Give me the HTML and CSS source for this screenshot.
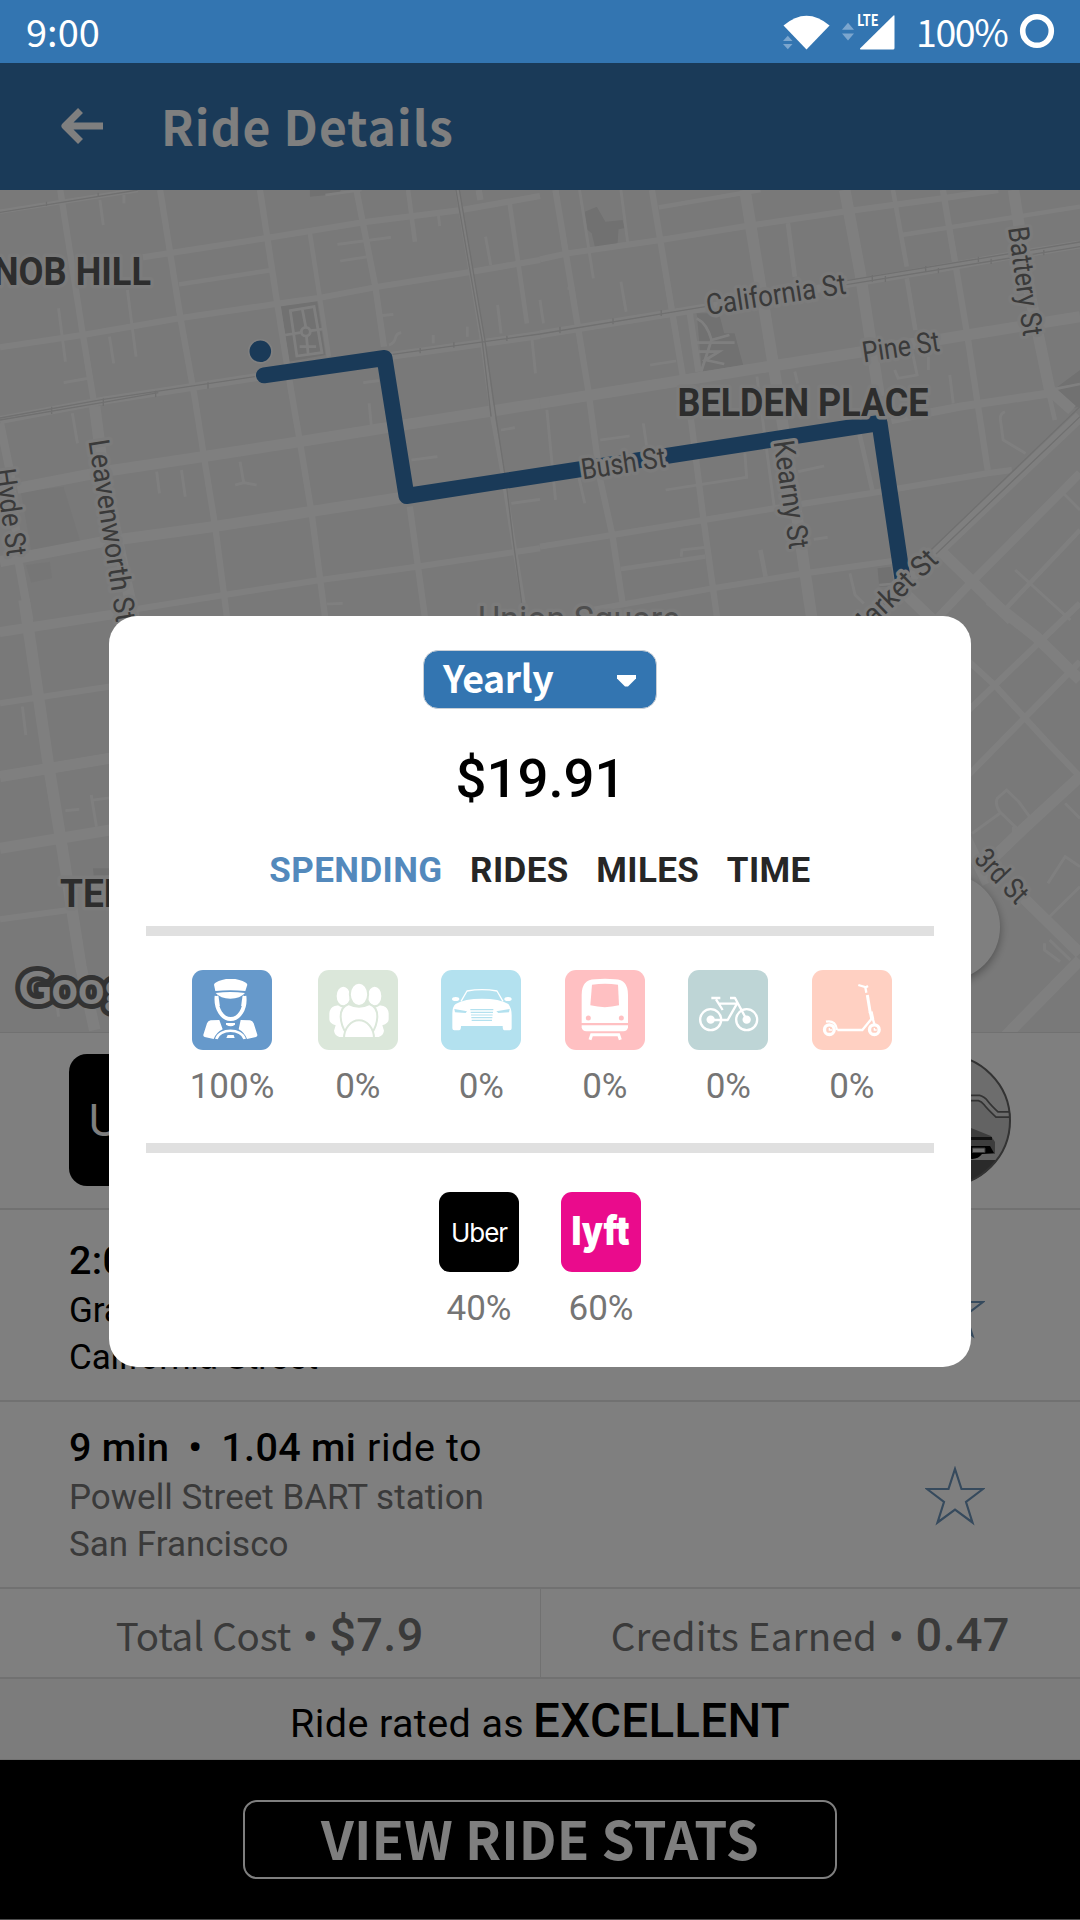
FILE: index.html
```html
<!DOCTYPE html>
<html lang="en">
<head>
<meta charset="utf-8">
<title>Ride Details</title>
<link rel="stylesheet" href="styles.css">
</head>
<body>
<div class="screen">
  <header class="status">
    <span class="status-time">9:00</span>
    <svg class="status-icons" width="116" height="63" viewBox="782 0 116 63">
      <path d="M783.5 25.500Q806.500 6 829.600 25.500L806.500 49.500Z" fill="#fff"/>
      <path d="M783 41h9.500l-4.700-5.300zM783 44h9.500l-4.700 5.300z" fill="#7ca6ce"/>
      <path d="M842 29.800h12l-6-7zM842 33.500h12l-6 7z" fill="#7ca6ce"/>
      <path d="M860 48.500L893.500 15.500q1-.8 1 .5V48q0 1.500-1.500 1.500H861q-1.500 0-1-1z" fill="#fff"/>
      <text class="lte" x="857" y="26" textLength="21.500" lengthAdjust="spacingAndGlyphs">LTE</text>
    </svg>
    <span class="status-battery">100%</span>
    <svg class="battery-ring" width="36" height="63" viewBox="1019 0 36 63"><circle cx="1037" cy="31" r="14.300" fill="none" stroke="#fff" stroke-width="5.600"/></svg>
  </header>

  <div class="app">
    <div class="appbar">
      <svg class="back" width="44" height="40" viewBox="0 0 44 40"><path d="M43 20H6M20.500 4.500L5 20l15.500 15.500" fill="none" stroke="#fff" stroke-width="7" stroke-linejoin="round"/></svg>
      <h1 class="title">Ride Details</h1>
    </div>

    <svg class="map" width="1080" height="843" viewBox="0 0 1080 843">
      <rect width="1080" height="843" fill="#f3f3f3"/>
      <!-- upper left blocks -->
      <g transform="scale(.34437 .33333)">
        <path class="park" d="M60 905L185 890L235 1060L90 1080ZM75 1125L145 1115L152 1165L90 1178Z" opacity=".35"/>
        <path class="park" d="M815 345L920 328L945 495L840 515ZM900 0H990L985 12L900 20Z"/>
        <path class="road w8" d="M290 30L300 105M170 355L190 515M370 300L395 500M318 440L330 520M185 578L255 565M210 670L225 760M455 845L463 910M527 840L538 920M697 815L708 880M683 885L708 878L745 885M980 163L1135 142M988 213L1070 200M1108 377L1142 373M1130 465Q1145 460 1148 445T1165 428M1072 640L1078 705M1055 578L1100 572M1195 810L1270 800M1485 940L1568 928M945 15L1050 0M1455 720L1495 713M950 1242L995 1240M1273 75L1277 108M1410 140L1425 225M1445 345L1455 430M360 15V40M1258 435V460M1357 410V440M1545 450L1555 550M843 362L912 350L935 488L862 498ZM878 358L888 412M890 440L895 495M828 435L872 428M903 422L940 417M870 470H918"/>
        <circle class="road w8" cx="888" cy="425" r="13"/>
        <path class="road w14" d="M0 65L400 0M520 283L790 240M900 130L955 500M1185 0L1205 155M1480 40L1530 400M1328 0L1400 450L1430 680L1460 850L1490 1050L1520 1240"/>
        <path class="road w18" d="M415 202L770 145L1055 97L1340 60L1568 18M0 472L240 435L520 385L800 342L920 325L1100 290L1370 245L1568 210M175 0L240 430L275 650M465 0L525 390L565 620L600 850L625 1010L660 1290M755 0L805 340L845 600L870 750L905 970L945 1290M1035 0L1090 290L1115 470M1190 950L1235 1290M0 1320L380 1260L650 1215L930 1170L1210 1130L1568 1075M1390 0L1395 30"/>
        <path class="road w24" d="M0 690L300 632L740 562L1140 497L1568 435M0 700L30 850L55 1120L85 1290"/>
        <path class="road w34" d="M50 895L300 845L590 800L870 755L1200 700L1568 640M0 1115L300 1055L620 1010L900 965L1180 920M275 650L300 850L390 1290"/>
        <path class="rail" d="M0 67L400 0M0 690L300 637L460 608M0 684L300 628L740 560M1140 493L1568 432M1324 0L1400 450L1426 680M1334 0L1408 450L1440 680M1440 680L1470 880L1490 1050L1515 1240M285 8V22M135 35V48M1220 474V490M1318 457V473M1472 437V453M604 577V596M452 602V622M300 625V648M150 650V672"/>
      </g>
      <!-- upper right blocks -->
      <g transform="translate(540 0) scale(.34437 .33333)">
        <path class="park" d="M130 65L165 50L190 95L240 90L245 115L228 118L225 165L160 173L150 130L138 120ZM455 370L520 370L535 430L565 430L590 525L470 545ZM1490 600L1568 540V650L1545 655ZM980 1135L1020 1130L1030 1190L985 1190Z"/>
        <path class="road w8" d="M115 0L155 265M235 0L255 160M235 275L250 365M80 295H100M92 280L95 330M0 330L10 400M175 750L260 738M365 900L600 862L595 790M750 845L825 828M795 1048L835 1042M320 525L395 513M630 560L680 950M740 545L748 580M300 700L310 770M1030 540L1040 565L1095 555L1080 480M1190 555L1200 640M1350 665Q1335 670 1337 690L1345 750L1410 790M410 1100L412 1080L480 1072M900 1150L915 1215L940 1240M455 385Q485 400 498 450L468 545M455 458H565M498 450L550 435M460 485H520L480 510L535 522M985 1185L1020 1182M20 660L45 930M110 850L130 940M1520 910L1568 960M1380 1140L1540 1290M1490 598L1568 582M1128 500V540"/>
        <path class="road w14" d="M345 52L640 0M1050 135L1190 112L1568 50M720 100L740 260M1025 0L1065 230M1065 265L1090 420M925 720L965 900M640 1080L655 1160M235 1137L480 1100M1568 1020L1340 1270M1475 600L1495 690"/>
        <path class="road w18" d="M0 208L80 190L350 150L600 108L880 65L1170 25L1330 0M45 0L140 600L175 870L210 1035L240 1240M325 0L415 560L440 700L475 990L515 1290M435 370L460 545M1170 0L1240 430L1300 840M0 1070L210 1035L475 990L680 955L960 910L1300 850L1370 840M140 1262L500 1195L770 1150L1060 1108"/>
        <path class="road w24" d="M0 433L480 353L900 280L1150 237L1350 200L1568 163M1568 850L1250 1180L1140 1300M1020 690L1220 650L1480 610"/>
        <path class="road w34" d="M0 640L600 540L1150 450L1568 380M595 0L680 540L735 900L770 1150L790 1290M885 0L930 250L985 620M1375 0L1420 300L1480 600L1545 660M1170 1090L1370 1290M1568 680L1150 1090L940 1300M1060 1210L1140 1290"/>
        <path class="rail" d="M0 432L480 350M890 272L1568 156M890 284L1568 170M1568 650L1135 1080M1568 680L1150 1092M58 410V430M212 385V403M352 360V378M965 255V275M1003 258V276M1120 228V246M1157 234V250M1273 200V216M1310 206V222M1463 180V196"/>
      </g>
      <!-- lower left blocks -->
      <g transform="translate(0 410) scale(.34437 .33333)">
        <path class="park" d="M270 805H330V825L272 828Z"/>
        <path class="road w8" d="M65 320L75 405M190 632L230 628M265 585L280 680M270 600L330 592M160 1170L170 1250"/>
        <path class="road w18" d="M0 102L330 48M0 310L330 258M0 958L200 930M150 1180L330 1150"/>
        <path class="road w34" d="M0 530L330 473M0 745L330 688M70 0L140 490L180 740L235 1100L275 1290"/>
      </g>
      <!-- lower right blocks -->
      <g transform="translate(540 410) scale(.34437 .33333)">
        <path class="road w8" d="M1425 655L1390 605L1355 570L1328 595Q1320 612 1335 635L1395 695M1465 965L1568 860M1525 610L1568 655M1475 850L1525 770L1568 800M1465 1030V1050L1510 1085M1480 1020L1540 1080M1255 700L1335 640M1375 680V700"/>
        <path class="road w18" d="M1230 170L1320 255L1480 435L1568 530M1230 540L1568 185M1230 345L1568 10"/>
        <path class="road w34" d="M1305 0L1440 110L1568 240M1290 800L1400 690L1568 530M1350 1310L1568 1080M1400 890L1568 1060M1230 700L1300 850"/>
      </g>
      <rect y="842" width="1080" height="1" fill="#e2e2e2"/>

      <g class="route">
        <path d="M264 185.300L384.500 168L406.500 306L879.500 233L903 392"/>
        <path d="M891 407L862 435" stroke-width="2"/>
        <circle cx="260.300" cy="161.300" r="11.600" fill="#3575b1" stroke="#fff" stroke-width="1.600"/>
      </g>

      <g class="street">
        <text transform="translate(707.700 125) rotate(-8.800)" textLength="141" lengthAdjust="spacingAndGlyphs">California St</text>
        <text transform="translate(863.700 172.500) rotate(-8.700)" textLength="78" lengthAdjust="spacingAndGlyphs">Pine St</text>
        <text transform="translate(582.700 289.500) rotate(-8.700)" textLength="85" lengthAdjust="spacingAndGlyphs">Bush St</text>
        <text transform="translate(1008 38) rotate(82)" textLength="110" lengthAdjust="spacingAndGlyphs">Battery St</text>
        <text transform="translate(773.500 252) rotate(81.500)" textLength="109" lengthAdjust="spacingAndGlyphs">Kearny St</text>
        <text transform="translate(88.500 251) rotate(81.300)" textLength="184" lengthAdjust="spacingAndGlyphs">Leavenworth St</text>
        <text transform="translate(-5 280) rotate(82)" textLength="88" lengthAdjust="spacingAndGlyphs">Hyde St</text>
        <text transform="translate(857 452.500) rotate(-44.500)" textLength="116" lengthAdjust="spacingAndGlyphs">Market St</text>
        <text transform="translate(973 670) rotate(46.500)" textLength="63" lengthAdjust="spacingAndGlyphs">3rd St</text>
      </g>
      <g class="district">
        <text x="-7" y="94.500" textLength="158" lengthAdjust="spacingAndGlyphs">NOB HILL</text>
        <text x="677.500" y="226" textLength="251" lengthAdjust="spacingAndGlyphs">BELDEN PLACE</text>
        <text x="60" y="717" textLength="220" lengthAdjust="spacingAndGlyphs">TENDERLOIN</text>
      </g>
      <text class="landmark" x="478" y="442" textLength="202" lengthAdjust="spacingAndGlyphs">Union Square</text>
      <text class="google" x="18.500" y="813.500">Google</text>
      <circle class="fab" cx="947" cy="737" r="53"/>
    </svg>

    <section class="providers">
      <div class="provider-tile">Uber</div>
      <svg class="photo" width="133" height="133" viewBox="0 0 133 133">
        <defs><clipPath id="disc"><circle cx="66.500" cy="66.500" r="66"/></clipPath></defs>
        <g clip-path="url(#disc)">
          <rect width="133" height="133" fill="#dadada"/>
          <path d="M0 45H103L118 60H133V106H0Z" fill="#c6c6c6"/>
          <path d="M0 106H133V133H0Z" fill="#545454"/>
          <path d="M60 70L93 74L113 82L117 88V100H50Z" fill="#7a7a7a"/>
          <path d="M60 83H114V86H60Z" fill="#222"/>
          <path d="M60 92H112L116 99L104 100Q98 108 86 103H60Z" fill="#000"/>
          <path d="M94.500 94H107V98.500H94.500Z" fill="#ddd" stroke="#666"/>
          <path d="M0 44H101Q105 45 108 49T119 60.500H133" fill="none" stroke="#666" stroke-width="7"/>
          <path d="M0 44H101Q105 45 108 49T119 60.500H133" fill="none" stroke="#d8d8d8" stroke-width="3.500"/>
        </g>
        <circle cx="66.500" cy="66.500" r="65.500" fill="none" stroke="#666" stroke-width="2"/>
      </svg>
    </section>

    <section class="stop stop-from">
      <div class="stop-text">
        <p class="stop-head"><b>2:04 PM</b></p>
        <p class="stop-line dark">Grace Cathedral</p>
        <p class="stop-line dark">California Street</p>
      </div>
      <svg class="star" width="60" height="60" viewBox="0 0 60 60"><path d="M30 3L36.500 23H58L41 36L47.500 56.500L30 43.500L12.500 56.500L19 36L2 23H23.500Z"/></svg>
    </section>

    <section class="stop stop-to">
      <div class="stop-text">
        <p class="stop-head"><b>9 min</b><b class="dot">•</b><b>1.04 mi</b> <span class="ride-to">ride to</span></p>
        <p class="stop-line">Powell Street BART station</p>
        <p class="stop-line">San Francisco</p>
      </div>
      <svg class="star" width="60" height="60" viewBox="0 0 60 60"><path d="M30 3L36.500 23H58L41 36L47.500 56.500L30 43.500L12.500 56.500L19 36L2 23H23.500Z"/></svg>
    </section>

    <section class="totals">
      <div class="total"><span class="total-label">Total Cost</span><span class="bullet">•</span><span class="total-value">$7.9</span></div>
      <div class="total"><span class="total-label wide">Credits Earned</span><span class="bullet">•</span><span class="total-value">0.47</span></div>
    </section>

    <section class="rated"><span class="rated-label">Ride rated as</span><span class="rated-value">EXCELLENT</span></section>

    <footer class="actions"><button class="stats-button">VIEW RIDE STATS</button></footer>
  </div>

  <div class="scrim">
    <div class="dialog">
      <div class="period"><span>Yearly</span><svg width="19" height="12" viewBox="0 0 19 12"><path d="M0 0H19V3.500L11 11.500H8L0 3.500Z" fill="#fff"/></svg></div>
      <div class="amount">$19.91</div>
      <nav class="tabs"><span class="tab active">SPENDING</span><span class="tab">RIDES</span><span class="tab">MILES</span><span class="tab">TIME</span></nav>
      <div class="rule"></div>
      <div class="modes">
        <div class="mode">
          <svg class="tile driver" viewBox="0 0 240 240">
            <g fill="#fff"><path d="M66 44Q68 36 90 30L102 27H130L142 30Q164 36 166 44L160 63Q115 58 70 63Z"/><path d="M71 69Q115 63 159 69Q145 86 115 86Q85 86 71 69Z"/>
            <path d="M34 194L45 160Q48 152 56 151L82 150L92 178Q72 188 65 207L38 201Q33 199 34 194ZM196 194L185 160Q182 152 174 151L146 150L140 178Q158 188 165 207L192 201Q197 199 196 194Z"/>
            <path d="M102 159H129V164Q122 169 116 169T102 164ZM107 195H125L128 204H103Z"/></g>
            <path d="M74 78C70 118 92 147 116 147S162 118 157 78" fill="none" stroke="#fff" stroke-width="12"/>
            <path d="M74 78Q79 90 80 108M157 78Q152 90 151 108" stroke="#fff" stroke-width="7" fill="none"/>
            <path d="M73 207C82 174 149 174 158 207" fill="none" stroke="#fff" stroke-width="8"/>
          </svg><span>100%</span></div>
        <div class="mode">
          <svg class="tile pool" viewBox="0 0 240 240"><g fill="#fff" stroke="#dbe7da" stroke-width="6">
            <path stroke="none" d="M34 130Q36 112 50 108L62 106L90 115V201H64Q50 196 48 182L53 166Q34 160 34 148ZM212 130Q210 112 196 108L184 106L156 115V201H182Q196 196 198 182L193 166Q212 160 212 148Z"/>
            <ellipse cx="76" cy="78" rx="23" ry="31"/><ellipse cx="170" cy="78" rx="23" ry="31"/>
            <path d="M68 140Q68 110 92 102Q123 118 154 102Q178 110 178 140Q177 168 160 192L123 205L86 192Q69 168 68 140Z"/>
            <ellipse cx="123" cy="73" rx="27.500" ry="35"/>
            <path d="M78 205A45 54 0 0 1 168 205Z"/></g><path d="M40 201H206V208H40Z" fill="#dbe7da"/></svg><span>0%</span></div>
        <div class="mode">
          <svg class="tile car" viewBox="0 0 240 240">
            <path d="M60 94L78 63Q123 55 168 63L186 94" fill="none" stroke="#fff" stroke-width="4"/>
            <g fill="#fff"><path d="M44 102Q70 86 123 86T202 102Q212 114 212 136V175Q212 181 206 181H190Q185 181 185 168H60Q60 181 54 181H40Q34 181 34 175V130Q34 110 44 102Z"/><ellipse cx="44" cy="87" rx="11" ry="6"/><ellipse cx="201" cy="87" rx="11" ry="6"/></g>
            <path d="M88 119H157M89 127H156M90 135H155M91 143H154M92 151H153" stroke="#b3e1ef" stroke-width="3.500"/>
            <path d="M40 117L78 124L74 129L42 127ZM206 117L166 124L172 129L204 127Z" fill="#b3e1ef"/>
          </svg><span>0%</span></div>
        <div class="mode">
          <svg class="tile train" viewBox="0 0 240 240">
            <path d="M50 159V75Q50 28 90 28Q120 24 150 28Q189 28 189 75V159Z" fill="#fff"/>
            <path d="M81 44Q120 38 159 44L162 106Q120 117 76 106Z" fill="#ffc0c2"/><circle cx="70" cy="144" r="7.500" fill="#ffc0c2"/><circle cx="169" cy="144" r="7.500" fill="#ffc0c2"/>
            <path d="M50 166H189V172Q187 184 175 184H64Q52 184 50 172Z" fill="#fff"/><path d="M75 209L80 194H161L166 209" fill="none" stroke="#fff" stroke-width="9"/>
          </svg><span>0%</span></div>
        <div class="mode">
          <svg class="tile bike" viewBox="0 0 240 240"><g fill="none" stroke="#fff" stroke-width="7">
            <circle cx="68" cy="149" r="31.500"/><circle cx="176" cy="149" r="31.500"/><path d="M68 150H119L147 101H90M84 88L104 120M70 84H97M126 84H141L176 149" stroke-linejoin="round"/></g>
            <circle cx="68" cy="149" r="12.500" fill="#fff"/><circle cx="176" cy="149" r="12.500" fill="#fff"/></svg><span>0%</span></div>
        <div class="mode">
          <svg class="tile scooter" viewBox="0 0 240 240"><g fill="none" stroke="#fff" stroke-width="7">
            <path d="M139 45L162 52L168 48M160 52L163 68"/><path d="M166 75L175 130" stroke-width="9"/><path d="M176 125L181 148" stroke-width="12"/><path d="M180 145L151 180H76M182 145L188 165M42 155C64 150 73 164 75 180"/>
            <circle cx="52" cy="179" r="14.500" stroke-width="10"/><circle cx="187" cy="179" r="14.500" stroke-width="10"/><path d="M52 174V180H60M187 174V180H194" stroke-width="4"/></g></svg><span>0%</span></div>
      </div>
      <div class="rule rule-low"></div>
      <div class="brands">
        <div class="mode"><div class="tile uber">Uber</div><span>40%</span></div>
        <div class="mode"><svg class="tile lyft" viewBox="0 0 80 80"><text x="10.500" y="52.500" textLength="58" lengthAdjust="spacingAndGlyphs">lyft</text></svg><span>60%</span></div>
      </div>
    </div>
  </div>
</div>
</body>
</html>
```
FILE: styles.css
```css
* { box-sizing: border-box; }
body { margin: 0; font-family: Roboto, sans-serif; }
p, h1 { margin: 0; font-weight: 400; }
svg { display: block; flex: none; }

.screen { position: relative; width: 1080px; height: 1920px; overflow: hidden; background: #fff; }

/* status bar */
.status { display: flex; height: 63px; background: #3375b1; color: #fff; font: 400 38px/61px "Noto Sans CJK SC", sans-serif; padding: 0 25px 0 26px; }
.status-time { margin-right: auto; }
.status-battery { margin-left: 18px; font-size: 37.500px; letter-spacing: -1.400px; width: 93px; }
.battery-ring { margin-left: 10px; }
.lte { font: 700 15.500px "Noto Sans CJK SC", sans-serif; fill: #fff; }

/* app bar */
.app { height: 1857px; }
.appbar { display: flex; height: 127px; background: #3575b1; color: #fff; padding-left: 60px; }
.back { margin-top: 43px; }
.title { margin-left: 57px; font: 700 48px/125px "Noto Sans CJK SC", sans-serif; letter-spacing: 1.100px; }

/* map */
.park { fill: #e2e2e2; }
.road { fill: none; stroke: #fff; }
.w8 { stroke-width: 8; }
.w14 { stroke-width: 13; }
.w18 { stroke-width: 18; }
.w24 { stroke-width: 24; }
.w34 { stroke-width: 33; }
.rail { fill: none; stroke: #e0e0e0; stroke-width: 4; }
.route { fill: none; stroke: #3575b1; stroke-width: 16; stroke-linecap: round; stroke-linejoin: round; }
.map text { paint-order: stroke; stroke: #f8f8f8; stroke-width: 7px; stroke-linejoin: round; }
.street { font: 400 29px Roboto, sans-serif; fill: #747474; }
.district { font: 700 38px Roboto, sans-serif; fill: #5a5a5a; }
.landmark { font: 400 36px Roboto, sans-serif; fill: #9c9c9c; }
.map .google { font: 700 46px Lato, sans-serif; fill: #fff; stroke: #666; stroke-width: 10px; }
.fab { fill: #fff; filter: drop-shadow(0 3px 5px rgba(0, 0, 0, .35)); }

/* ride details */
.providers { display: flex; justify-content: space-between; height: 177px; padding: 21px 69px 0; border-bottom: 2px solid #e2e2e2; }
.provider-tile { width: 132px; height: 132px; border-radius: 18px; background: #000; color: #fff; font: 400 44px/132px Inter, sans-serif; letter-spacing: -2px; text-align: center; }
.stop { display: flex; justify-content: space-between; border-bottom: 2px solid #e2e2e2; padding: 26px 95px 0 69px; }
.stop-from { height: 192px; }
.stop-to { height: 187px; padding-top: 21px; }
.stop-head { font-size: 39.500px; line-height: 50px; color: #000; }
.stop-head b { font-weight: 500; letter-spacing: .3px; }
.stop-head .dot { margin: 0 19px 0 19px; }
.ride-to { letter-spacing: .6px; margin-left: 1px; }
.stop-line { font-size: 35px; line-height: 47px; color: #757575; position: relative; top: 1px; }
.stop-line.dark { color: #000; letter-spacing: -.1px; }
.star { fill: none; stroke-width: 2.200; margin-top: 43px; }
.star path { stroke: #6c94ba; }

.totals { display: flex; height: 90px; border-bottom: 2px solid #e2e2e2; color: #757575; }
.total { flex: 1; display: flex; justify-content: center; align-items: baseline; gap: 12px; padding-top: 2px; line-height: 86px; }
.total + .total { border-left: 1px solid #e2e2e2; }
.total-label { font: 400 38.500px/86px "Noto Sans CJK SC", sans-serif; letter-spacing: -.2px; }
.total-label.wide { letter-spacing: .2px; }
.bullet { font: 700 40px/86px Roboto, sans-serif; }
.total-value { font: 500 47px/86px Roboto, sans-serif; letter-spacing: .3px; }

.rated { display: flex; justify-content: center; align-items: baseline; gap: 9px; height: 81px; padding-top: 3px; border-bottom: 1px solid #e2e2e2; background: #f9f9f9; color: #000; line-height: 78px; }
.rated-label { font-size: 39.500px; letter-spacing: .4px; }
.rated-value { font-size: 47.500px; font-weight: 500; letter-spacing: .3px; }

.actions { display: flex; justify-content: center; align-items: flex-start; height: 160px; padding-top: 40px; background: #000; border-bottom: 1px solid #999; }
.stats-button { width: 594px; height: 79px; padding: 0; border: 2px solid #fff; border-radius: 14px; background: none; color: #fff; font: 700 53px/70px "Noto Sans CJK SC", sans-serif; letter-spacing: .1px; display: flex; justify-content: center; }

/* statistics dialog */
.scrim { position: absolute; inset: 63px 0 0; background: rgba(0, 0, 0, .5); display: flex; align-items: center; justify-content: center; }
.dialog { width: 862px; height: 751px; border-radius: 28px; background: #fff; display: flex; flex-direction: column; align-items: center; padding-top: 34px; }
.period { display: flex; justify-content: space-between; align-items: flex-start; width: 234px; height: 59px; padding: 0 20px 0 19px; border: 1px solid #c9cfd6; border-radius: 15px; background: #3375b1; color: #fff; font: 700 37.500px/52px "Noto Sans CJK SC", sans-serif; letter-spacing: -.4px; }
.period svg { margin-top: 24px; }
.amount { margin-top: 37px; font-size: 54.500px; line-height: 64px; font-weight: 500; color: #000; margin-right: -1px; }
.tabs { display: flex; gap: 27.500px; margin-top: 40px; font-size: 35px; line-height: 42px; font-weight: 700; letter-spacing: .4px; color: #262626; }
.tab.active { color: #5389bc; }
.rule { width: 788px; height: 10px; margin-top: 34px; background: #e0e0e0; }
.rule-low { margin-top: 35px; }
.modes { display: flex; gap: 43.500px; margin-top: 34px; padding-left: 1.500px; }
.brands { display: flex; gap: 42px; margin-top: 39px; }
.mode { display: flex; flex-direction: column; align-items: center; gap: 16px; font-size: 35px; line-height: 42px; color: #757575; }
.tile { width: 80px; height: 80px; border-radius: 11px; }
.driver { background: #6699cb; }
.pool { background: #dbe7da; }
.car { background: #b3e1ef; }
.train { background: #ffc0c2; }
.bike { background: #bed5d6; }
.scooter { background: #ffd0c2; }
.uber { background: #000; color: #fff; font: 400 26px/81px Inter, sans-serif; letter-spacing: -1.100px; text-align: center; }
.lyft { background: #ea0b8c; font: 900 40px Inter, sans-serif; fill: #fff; }
```
